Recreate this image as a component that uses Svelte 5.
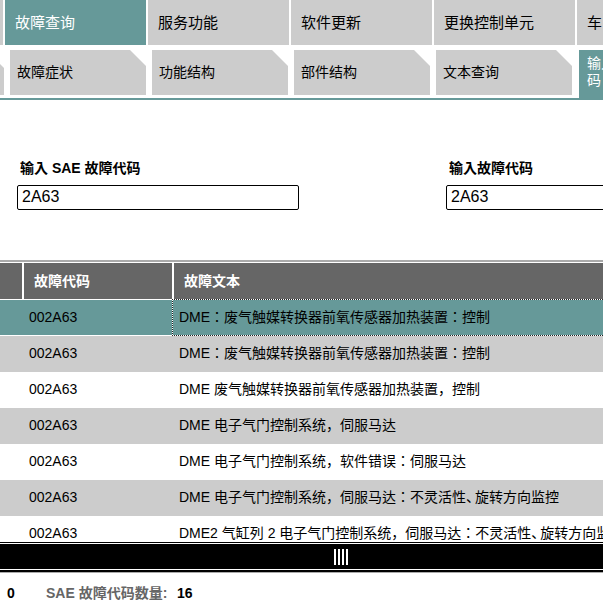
<script>
  const tabs = ['服务功能', '软件更新', '更换控制单元', '车'];
  const subs = ['故障症状', '功能结构', '部件结构', '文本查询'];
  const rows = [
    ['DME：废气触媒转换器前氧传感器加热装置：控制'],
    ['DME：废气触媒转换器前氧传感器加热装置：控制'],
    ['DME 废气触媒转换器前氧传感器加热装置，控制'],
    ['DME 电子气门控制系统，伺服马达'],
    ['DME 电子气门控制系统，软件错误：伺服马达'],
    ['DME 电子气门控制系统，伺服马达：不灵活性', '旋转方向监控'],
    ['DME2 气缸列 2 电子气门控制系统，伺服马达：不灵活性', '旋转方向监控']
  ];
</script>

<div class="page">
  <nav class="tabs">
    <div class="stub"></div>
    <div class="tab active">故障查询</div>
    {#each tabs as t}<div class="tab">{t}</div>{/each}
  </nav>
  <nav class="subs">
    <div class="sub first"></div>
    {#each subs as s}<div class="sub">{s}</div>{/each}
    <div class="sub-active">输入故障代码</div>
  </nav>
  <section class="form">
    <div class="field">
      <div class="label">输入 SAE 故障代码</div>
      <div class="input">2A63</div>
    </div>
    <div class="field second">
      <div class="label">输入故障代码</div>
      <div class="input">2A63</div>
    </div>
  </section>
  <section class="table">
    <div class="head">
      <div class="c0"></div>
      <div class="c1">故障代码</div>
      <div class="c2">故障文本</div>
    </div>
    <div class="body">
      {#each rows as r, i}
        <div class="row" class:sel={i === 0} class:alt={i % 2 === 1}>
          <div class="code">002A63</div>
          <div class="text">{r[0]}{#if r[1]}<span class="dun">、</span>{r[1]}{/if}</div>
        </div>
      {/each}
    </div>
  </section>
  <div class="splitter">
    <div class="bar">
      <div class="grip"><i></i><i></i><i></i><i></i></div>
    </div>
  </div>
  <footer class="foot">
    <span class="zero">0</span>
    <span class="cap">SAE 故障代码数量:</span>
    <span class="num">16</span>
  </footer>
</div>

<style>
  :global(body) { margin: 0; background: #fff; overflow: hidden; }
  .page {
    width: 603px; height: 601px; overflow: hidden;
    font-family: "Liberation Sans", "Noto Sans CJK JP", sans-serif;
    font-size: 14px; color: #000;
  }
  .tabs { display: flex; gap: 2px; height: 45px; width: 800px; }
  .stub { width: 3px; background: #ccc; }
  .tab {
    flex: none; width: 141px; box-sizing: border-box; padding-left: 10px;
    background: #ccc; font-size: 15px; line-height: 45px;
  }
  .tab.active { background: #669999; color: #fff; }
  .subs { display: flex; gap: 6px; height: 50px; margin-top: 5px; width: 800px; position: relative; }
  .subs::after {
    content: ""; position: absolute; left: 0; right: 0; bottom: 0; height: 2px; background: #669999;
  }
  .sub {
    width: 136px; height: 45px; flex: none; box-sizing: border-box; padding-left: 7px;
    background: #ccc; line-height: 45px; font-size: 14px;
    clip-path: polygon(0 0, 120px 0, 100% 16px, 100% 100%, 0 100%);
  }
  .sub.first { width: 4px; padding: 0; clip-path: polygon(0 14px, 100% 18px, 100% 100%, 0 100%); }
  .sub-active {
    flex: none; width: 80px; height: 50px; box-sizing: border-box; margin-left: 1px;
    background: #669999; color: #fff; padding: 5px 0 0 8px; line-height: 17px; font-size: 14px;
    overflow: hidden; z-index: 1;
  }
  .form { display: flex; height: 160px; box-sizing: border-box; padding: 59px 0 0 17px; }
  .field { width: 282px; flex: none; }
  .field.second { margin-left: 147px; }
  .label { font-size: 14px; font-weight: bold; line-height: 18px; padding-left: 3px; margin-bottom: 8px; }
  .input {
    box-sizing: border-box; height: 25px; border: 1px solid #000; border-radius: 2px;
    padding-left: 4px; font-size: 16px; line-height: 22px;
  }
  .table { height: 282px; border-top: 2px solid #aaa; box-sizing: border-box; overflow: hidden; }
  .head { display: flex; gap: 2px; height: 36px; margin-top: 1px; color: #fff; font-weight: bold; line-height: 36px; }
  .head > div { background: #666; box-sizing: border-box; padding-left: 10px; }
  .c0 { width: 22px; }
  .c1 { width: 148px; }
  .c2 { flex: 1; }
  .body { width: 900px; }
  .row { display: flex; height: 36px; line-height: 35px; }
  .row.sel { height: 37px; width: 603px; }
  .row.alt { background: #ccc; }
  .code { width: 172px; padding-left: 29px; box-sizing: border-box; flex: none; }
  .text { flex: 1; padding-left: 7px; white-space: nowrap; }
  .dun { letter-spacing: -5px; }
  .sel .code { background: #669999; margin: 1px 0; line-height: 35px; }
  .sel .text {
    background: #669999; background-clip: padding-box;
    border: 1px dotted #222; border-right: 0; padding-left: 6px; line-height: 35px;
  }
  .splitter { border-top: 1px solid #000; border-bottom: 2px solid #000; box-shadow: 0 1px 0 #aaa; }
  .bar {
    height: 25px; background: #000; border-top: 1px solid #fff; border-bottom: 1px solid #fff;
    display: flex; align-items: center; padding-left: 334px;
  }
  .grip { display: flex; gap: 2px; }
  .grip i { width: 2px; height: 16px; background: #fff; display: block; }
  .foot { display: flex; padding: 13px 0 0 7px; font-weight: bold; font-size: 14px; line-height: 16px; }
  .zero { width: 39px; }
  .cap { color: #666; width: 131px; }
</style>
